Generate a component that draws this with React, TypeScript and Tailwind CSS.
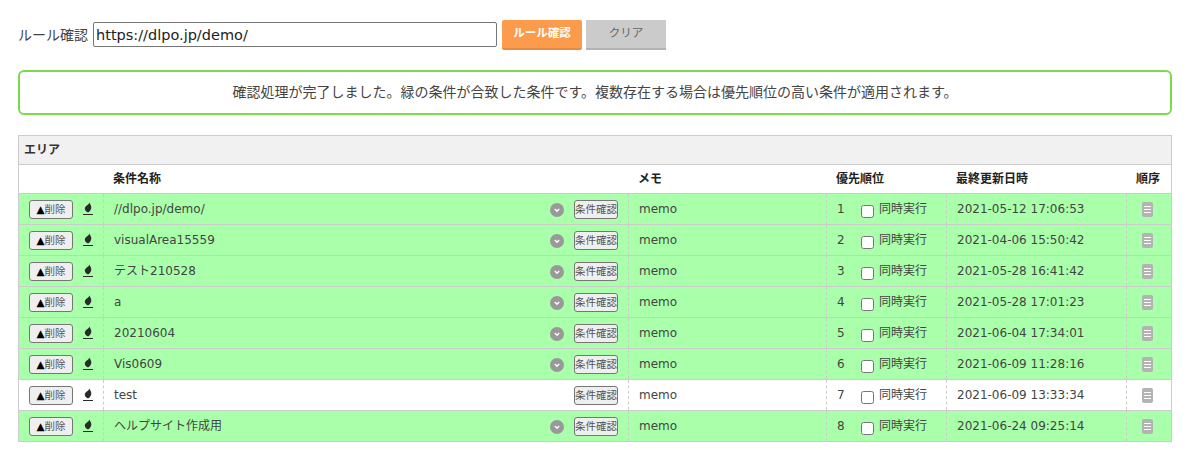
const ff = "[font-family:'DejaVu_Sans','Noto_Sans_CJK_JP',sans-serif]";
const rows = [
  ["//dlpo.jp/demo/", "1", "2021-05-12 17:06:53", true],
  ["visualArea15559", "2", "2021-04-06 15:50:42", true],
  ["テスト210528", "3", "2021-05-28 16:41:42", true],
  ["a", "4", "2021-05-28 17:01:23", true],
  ["20210604", "5", "2021-06-04 17:34:01", true],
  ["Vis0609", "6", "2021-06-09 11:28:16", true],
  ["test", "7", "2021-06-09 13:33:34", false],
  ["ヘルプサイト作成用", "8", "2021-06-24 09:25:14", true],
] as [string, string, string, boolean][];

function Flame() {
  return (
    <svg width="10" height="14" viewBox="0 0 10 14" className="block">
      <path d="M6.6 0.5 C6.8 2.4 8.6 3.4 8.3 6 C8.1 7.9 6.8 9.4 5 10.6 C3.2 9.8 1.8 8.6 1.8 6.6 C1.8 4 5.4 3.2 6.6 0.5Z" fill="#2a2a2a" />
      <rect x="0" y="12" width="10" height="1" fill="#2a2a2a" />
    </svg>
  );
}
function Chevron() {
  return (
    <svg width="14" height="14" viewBox="0 0 14 14" className="block mt-[2px]">
      <circle cx="7" cy="7" r="7" fill="#999" />
      <path d="M4.8 6 L7 8.2 L9.2 6" fill="none" stroke="#fff" strokeWidth="1.4" />
    </svg>
  );
}
function Handle() {
  return (
    <div className="w-[11px] h-[15px] rounded-[2px] bg-[#b3b3b3] flex flex-col items-center justify-center gap-[2px]">
      <div className="w-[7px] h-px bg-white" />
      <div className="w-[7px] h-px bg-white" />
      <div className="w-[7px] h-px bg-white" />
    </div>
  );
}
const smallBtn = "h-[19px] rounded-[3px] border border-[#767676] bg-[#efefef] text-[#555] text-[10.5px] leading-none flex items-center justify-center";

export default function App() {
  return (
    <div className={`${ff} w-[1190px] h-[450px] bg-white text-[#333] text-[13px] overflow-hidden px-[18px] pt-[20px]`}>
      <div className="flex items-start h-[30px]">
        <span className="text-[14px] leading-[30px] mr-[5px] text-[#444]">ルール確認</span>
        <input
          readOnly
          value="https://dlpo.jp/demo/"
          className="mt-[2px] w-[404px] h-[25px] border border-[#767676] rounded-[2px] px-[2px] text-[14.5px] text-[#222] outline-none"
        />
        <button className="ml-[5px] w-[80px] h-[30px] rounded-[2px] bg-[#fb9b4b] border-b-2 border-[#e58b42] text-white text-[11.5px] font-bold">ルール確認</button>
        <button className="ml-[4px] w-[80px] h-[30px] bg-[#cbcbcb] border-b-2 border-[#b3b3b3] text-[#666] text-[11.5px]">クリア</button>
      </div>
      <div className="mt-[20px] h-[45px] w-[1154px] border-2 border-[#7adb4f] rounded-[6px] flex items-center justify-center text-[14px] text-[#444]">
        確認処理が完了しました。緑の条件が合致した条件です。複数存在する場合は優先順位の高い条件が適用されます。
      </div>
      <div className="mt-[20px] w-[1154px] border border-[#cccccc]">
        <div className="h-[29px] bg-[#f1f1f1] border-b border-[#cccccc] flex items-center pl-[5px] text-[12px] font-bold">エリア</div>
        <div className="h-[29px] flex items-center border-b border-[#cccccc] text-[12px] font-bold text-[#222]">
          <div className="w-[84px]" />
          <div className="w-[525px] pl-[10px]">条件名称</div>
          <div className="w-[198px] pl-[10px]">メモ</div>
          <div className="w-[120px] pl-[10px]">優先順位</div>
          <div className="w-[180px] pl-[10px]">最終更新日時</div>
          <div className="flex-1 pl-[10px]">順序</div>
        </div>
        {rows.map(([name, n, date, ok], i) => (
          <div
            key={n}
            className={`flex items-stretch text-[12px] text-[#444] ${i < rows.length - 1 ? "h-[31px] border-b border-[#cccccc]" : "h-[30px]"} ${ok ? "bg-[#aaffaa]" : "bg-white"}`}
          >
            <div className="w-[85px] flex items-center pl-[10px] border-r border-dashed border-[#cccccc]">
              <button className={`${smallBtn} w-[44px]`}><span className="text-black">▲</span>削除</button>
              <span className="ml-[10px]"><Flame /></span>
            </div>
            <div className="w-[525px] flex items-center pl-[10px] border-r border-dashed border-[#cccccc]">
              <span className="flex-1">{name}</span>
              {ok && <Chevron />}
              <button className={`${smallBtn} w-[44px] ml-[10px] mr-[10px]`}>条件確認</button>
            </div>
            <div className="w-[198px] flex items-center pl-[10px] border-r border-dashed border-[#cccccc]">memo</div>
            <div className="w-[120px] flex items-center pl-[10px] border-r border-dashed border-[#cccccc]">
              <span className="w-[24px]">{n}</span>
              <input type="checkbox" className="w-[13px] h-[13px] mt-[4px] mr-[5px]" readOnly />
              <span>同時実行</span>
            </div>
            <div className="w-[180px] flex items-center pl-[10px] border-r border-dashed border-[#cccccc]">{date}</div>
            <div className="flex-1 flex items-center pl-[15px]"><Handle /></div>
          </div>
        ))}
      </div>
    </div>
  );
}
